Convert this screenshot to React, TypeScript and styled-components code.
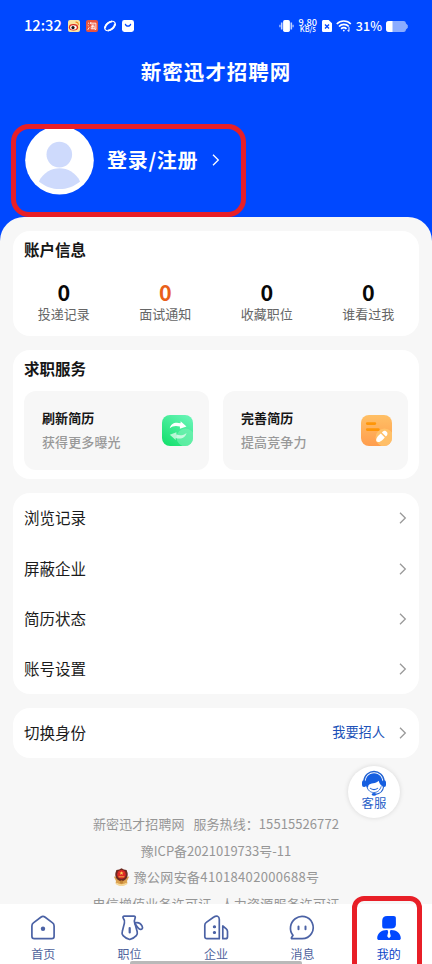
import React from "react";
import styled, { createGlobalStyle } from "styled-components";

const Global = createGlobalStyle`
  * { box-sizing: border-box; }
  html, body { margin: 0; padding: 0; }
  body {
    font-family: "Noto Sans CJK SC", "Noto Sans", sans-serif;
    background: #f7f7f7;
    overflow: hidden;
  }
`;

const Screen = styled.div`
  position: relative;
  width: 432px;
  height: 964px;
  overflow: hidden;
  display: flex;
  flex-direction: column;
  background: #0048ff;
`;

const StatusBar = styled.header`
  flex: none;
  height: 52px;
  padding: 0 24px;
  display: flex;
  align-items: center;
  justify-content: space-between;
  color: #fff;
`;

const StatusGroup = styled.div<{ $gap: number }>`
  display: flex;
  align-items: center;
  gap: ${(p) => p.$gap}px;
  svg { display: block; flex: none; }
`;

const Clock = styled.span`
  width: 37px;
  font-size: 14.7px;
  font-weight: 500;
  line-height: 20px;
  margin: -2px 1px 0 0;
  white-space: nowrap;
`;

const Speed = styled.span`
  width: 20px;
  display: flex;
  flex-direction: column;
  align-items: center;
  font-weight: 500;
  font-size: 9.2px;
  line-height: 8px;
  white-space: nowrap;
  margin-top: -2px;
  small { font-size: 7.3px; line-height: 7px; }
`;

const Percent = styled.span`
  font-size: 12.6px;
  font-weight: 500;
  line-height: 20px;
`;

const Title = styled.h1`
  flex: none;
  margin: 0;
  height: 40px;
  line-height: 38px;
  text-align: center;
  color: #fff;
  font-size: 20.5px;
  letter-spacing: 1px;
  font-weight: 700;
`;

const Profile = styled.section`
  flex: none;
  height: 125px;
  padding: 34px 0 0 25px;
  display: flex;
  align-items: flex-start;
  color: #fff;
`;

const LoginLink = styled.div`
  height: 68px;
  margin-left: 13px;
  display: flex;
  align-items: center;
  gap: 14px;
  font-size: 20px;
  font-weight: 700;
  letter-spacing: 0.7px;
  line-height: 30px;
  svg { display: block; }
`;

const Sheet = styled.main`
  flex: 1;
  min-height: 0;
  overflow: hidden;
  background: #f7f7f7;
  border-radius: 24px 24px 0 0;
  padding: 14px 13px 0;
  display: flex;
  flex-direction: column;
  gap: 14px;
`;

const Card = styled.section<{ $height: number }>`
  flex: none;
  height: ${(p) => p.$height}px;
  background: #fff;
  border-radius: 17px;
`;

const CardTitle = styled.h2`
  margin: 0;
  padding: 0 11px;
  height: 41px;
  line-height: 37px;
  font-size: 15.5px;
  font-weight: 700;
  color: #161616;
`;

const Stats = styled.div`
  display: grid;
  grid-template-columns: repeat(4, 1fr);
  padding-top: 8px;
`;

const Stat = styled.div`
  display: flex;
  flex-direction: column;
  align-items: center;
`;

const StatValue = styled.span<{ $accent?: boolean }>`
  height: 24px;
  line-height: 23px;
  font-size: 21.5px;
  font-weight: 700;
  color: ${(p) => (p.$accent ? "#e9601a" : "#080808")};
`;

const StatLabel = styled.span`
  font-size: 13px;
  line-height: 20px;
  color: #666;
`;

const Services = styled.div`
  display: grid;
  grid-template-columns: 1fr 1fr;
  gap: 14px;
  padding: 0 11px;
`;

const Service = styled.div`
  height: 79px;
  border-radius: 12px;
  background: #f7f7f7;
  display: flex;
  align-items: center;
  justify-content: space-between;
  padding: 0 16px 0 18px;
  svg { display: block; }
`;

const ServiceText = styled.div`
  padding-bottom: 2px;
  font-size: 13px;
  line-height: 24px;
  letter-spacing: 0.12px;
`;

const ServiceName = styled.div`
  font-weight: 700;
  color: #161616;
`;

const ServiceHint = styled.div`
  font-weight: 500;
  color: #999;
`;

const Row = styled.div`
  height: 50.4px;
  padding: 0 12px 0 11px;
  display: flex;
  align-items: center;
  justify-content: space-between;
  font-size: 15.5px;
  line-height: 24px;
  color: #1b1b1b;
  svg { display: block; }
`;

const RowLabel = styled.span`
  padding-bottom: 2px;
`;

const RowAction = styled.span`
  display: flex;
  align-items: center;
  gap: 14px;
  font-size: 13.2px;
  color: #2152b8;
`;

const Legal = styled.footer`
  flex: none;
  margin-top: 39px;
  display: flex;
  flex-direction: column;
  align-items: center;
  font-size: 13px;
  color: #969696;
`;

const LegalLine = styled.div<{ $spacing?: number }>`
  height: 26.5px;
  display: flex;
  align-items: center;
  line-height: 26px;
  white-space: pre;
  letter-spacing: ${(p) => p.$spacing ?? 0}px;
  svg { display: block; margin-right: 4px; }
`;

const TabBar = styled.nav`
  flex: none;
  height: 60px;
  background: #fff;
  display: grid;
  grid-template-columns: repeat(5, 1fr);
`;

const Tab = styled.div<{ $active?: boolean }>`
  display: flex;
  flex-direction: column;
  align-items: center;
  padding-top: 10px;
  color: ${(p) => (p.$active ? "#0a45c8" : "#50639c")};
  font-size: 12px;
  line-height: 20px;
  svg { display: block; margin-bottom: 1px; }
`;

const Support = styled.div`
  position: absolute;
  left: 348px;
  top: 766px;
  width: 52px;
  height: 52px;
  border-radius: 50%;
  background: #fff;
  box-shadow: 0 0 5px rgba(0, 0, 0, 0.13);
  display: flex;
  flex-direction: column;
  align-items: center;
  padding-top: 4px;
  color: #2860c8;
  font-size: 12.4px;
  line-height: 13px;
  svg { display: block; }
`;

const HomeIndicator = styled.div`
  position: absolute;
  left: 130px;
  bottom: 0;
  width: 172px;
  height: 3px;
  border-radius: 2px 2px 0 0;
  background: #b9b9b9;
`;

const Marker = styled.div<{ $x: number; $y: number; $w: number; $h: number; $r: number }>`
  position: absolute;
  left: ${(p) => p.$x}px;
  top: ${(p) => p.$y}px;
  width: ${(p) => p.$w}px;
  height: ${(p) => p.$h}px;
  border: 5px solid #e81f27;
  border-radius: ${(p) => p.$r}px;
`;

const Chevron = ({ color = "#999" }: { color?: string }) => (
  <svg width="8" height="14" viewBox="0 0 8 14" fill="none" stroke={color} strokeWidth="1.3">
    <path d="M1 1.8 6.3 7 1 12.2" />
  </svg>
);

const WeiboIcon = () => (
  <svg width="12" height="12" viewBox="0 0 12 12">
    <rect width="12" height="12" rx="2" fill="#fbe3a0" />
    <ellipse cx="5.5" cy="7.3" rx="4.6" ry="3.3" fill="#d9291f" />
    <ellipse cx="5.4" cy="7.5" rx="3.3" ry="2.2" fill="#fff" />
    <circle cx="5" cy="7.6" r="1.6" fill="#111" />
    <path d="M7.5 2.2c2-.3 3.2 1.2 2.7 3" fill="none" stroke="#ef8b1d" strokeWidth="1.1" />
  </svg>
);

const TaoIcon = () => (
  <svg width="12" height="12" viewBox="0 0 12 12" fill="none" stroke="#fff" strokeWidth=".9">
    <rect width="12" height="12" rx="2" fill="#e8533d" stroke="none" />
    <path d="M2 2.8l1 .8M1.7 5.2l1 .8M1.8 9.8l1.5-2.5M5 2l-.9 2.2M4.6 3.2h5.3v6.2l-1.2.2M5.2 5h3.4M4.8 6.7h4M6.8 5v3.7M5.2 7.4v1.4h3.4V7.4" />
  </svg>
);

const LoopIcon = () => (
  <svg width="12" height="12" viewBox="0 0 12 12" fill="none" stroke="#fff">
    <ellipse cx="6" cy="6" rx="6" ry="3.9" transform="rotate(-38 6 6)" strokeWidth="1.1" />
    <path d="M.9 8.3C1.3 5 4.5 2 8.2 1.4M11.1 3.7C10.7 7 7.5 10 3.8 10.6" strokeWidth="1.9" />
  </svg>
);

const BagIcon = () => (
  <svg width="12" height="12" viewBox="0 0 12 12">
    <rect width="12" height="12" rx="2.4" fill="#fff" />
    <path d="M3.3 3.8c.5 3.1 4.9 3.1 5.4 0" fill="none" stroke="#0048ff" strokeWidth="1.2" />
  </svg>
);

const VibrateIcon = () => (
  <svg width="15" height="12" viewBox="0 0 15 12" fill="#fff">
    <rect x="4.1" y="0" width="6.8" height="12" rx="1.7" />
    <path d="M2.7 2.5v7M12.3 2.5v7" stroke="#fff" strokeOpacity=".75" strokeWidth="1.6" />
    <path d="M.9 4.7v2.6M14.1 4.7v2.6" stroke="#fff" strokeOpacity=".6" strokeWidth="1.4" />
  </svg>
);

const SimIcon = () => (
  <svg width="10" height="12" viewBox="0 0 10 12">
    <path d="M1.6 0h5L10 3.2v7.2c0 1-.6 1.6-1.6 1.6H1.6C.6 12 0 11.4 0 10.4V1.6C0 .6.6 0 1.6 0z" fill="#fff" />
    <path d="M3 4.5l4 4M7 4.5l-4 4" stroke="#0048ff" strokeWidth="1.4" />
  </svg>
);

const WifiIcon = () => (
  <svg width="16" height="12" viewBox="0 0 16 12" fill="none" stroke="#fff" strokeWidth="1.7">
    <path d="M.8 4c3.8-4 10.2-4 14 0M3 6.5c2.7-2.8 7.1-2.8 9.8 0" />
    <path d="M5.1 8.8c1.5-1.6 3.9-1.6 5.4 0" />
    <circle cx="7.8" cy="10.6" r=".9" fill="#fff" stroke="none" />
    <path d="M13 7v4.5M11.6 10l1.4 1.5" strokeWidth="1.1" strokeOpacity=".85" />
  </svg>
);

const BatteryIcon = () => (
  <svg width="22" height="11" viewBox="0 0 22 11">
    <path d="M3 0h14.5c1.6 0 2.2.8 2.5 2.5l1.8 1.7v2.6L20 8.5c-.3 1.7-.9 2.5-2.5 2.5H3C1 11 0 10 0 8V3c0-2 1-3 3-3z" fill="#8bacff" />
    <path d="M3 0h3.5v11H3C1 11 0 10 0 8V3c0-2 1-3 3-3z" fill="#fff" />
  </svg>
);

const Avatar = () => (
  <svg width="69" height="69" viewBox="0 0 69 69">
    <circle cx="34.5" cy="34.2" r="34.3" fill="#fff" />
    <circle cx="34.3" cy="28.6" r="12.8" fill="#cedafc" />
    <path d="M13.9 55.4C22.5 37.9 46.5 37.9 55.1 55.4C43 65.6 26 65.6 13.9 55.4z" fill="#cedafc" />
  </svg>
);

const RefreshIcon = () => (
  <svg width="31" height="31" viewBox="0 0 31 31">
    <defs>
      <linearGradient id="green" x1="0" y1="1" x2=".7" y2="0">
        <stop offset="0" stopColor="#0fdf68" />
        <stop offset="1" stopColor="#63f3b2" />
      </linearGradient>
      <clipPath id="tile"><rect width="31" height="31" rx="8" /></clipPath>
    </defs>
    <g clipPath="url(#tile)">
      <rect width="31" height="31" fill="url(#green)" />
      <circle cx="23.5" cy="22.5" r="9" fill="#7af2b5" fillOpacity=".6" />
    </g>
    <path d="M7.8 13.2C8.6 8.6 13.2 6.6 18.6 8.3V6.2l5.9 5.2-6.6 2.4v-2.2c-4-1.3-7.3-.7-10.1 1.6z" fill="#fff" />
    <path d="M24.5 18C23.7 22.6 19.1 24.6 13.7 22.9V25l-5.9-5.2 6.6-2.6v2.4c4 1.3 7.3.7 10.1-1.6z" fill="#fff" fillOpacity=".65" />
  </svg>
);

const ResumeIcon = () => (
  <svg width="31" height="31" viewBox="0 0 31 31">
    <defs>
      <linearGradient id="orange" x1="0" y1="0" x2="0" y2="1">
        <stop offset="0" stopColor="#ffc066" />
        <stop offset="1" stopColor="#ff9d4d" />
      </linearGradient>
      <clipPath id="tile2"><rect width="31" height="31" rx="8" /></clipPath>
    </defs>
    <g clipPath="url(#tile2)">
      <rect width="31" height="31" fill="url(#orange)" />
      <circle cx="23.5" cy="22.5" r="9" fill="#ffc86f" fillOpacity=".75" />
    </g>
    <path d="M6.3 8.6h7.5M6.3 14.6h11" stroke="#ff9608" strokeWidth="2.9" strokeLinecap="round" />
    <path d="M15.6 26.6c-1.2-1.9.3-4.6 2.2-6.4l2-1.8 4 4-1.8 2c-1.8 1.9-4.6 3.4-6.4 2.2z" fill="#fff" />
    <path d="M20.9 17.4l1-1c2.4-2 6 1.6 4 4l-1 1z" fill="#fff" />
  </svg>
);

const PoliceIcon = () => (
  <svg width="17" height="18" viewBox="0 0 17 18">
    <path d="M.8 8.5L3 13l-.4 2.3C5.6 18.6 11.4 18.6 14.4 15.3L14 13l2.2-4.5L13.3 9H3.7z" fill="#dba250" />
    <path d="M3.2 15.4c2.9 2.2 7.7 2.2 10.6 0" stroke="#f6d898" strokeWidth="1.8" fill="none" />
    <path d="M8.5.3l2.3 1.3 2.8.3 1 3c.7 4.4-1.8 7.3-6.1 8.6C4.2 12.2 1.7 9.3 2.4 4.9l1-3 2.8-.3z" fill="#6d2920" />
    <circle cx="8.5" cy="6.4" r="4.3" fill="#dc2924" />
    <path d="M8.5 3.2l.6 1.4h1.5l-1.2.9.4 1.5-1.3-.9-1.3.9.4-1.5-1.2-.9h1.5z" fill="#ffce53" />
    <path d="M5.7 8.8h5.6" stroke="#f0b044" />
    <circle cx="8.5" cy="14" r="1.7" fill="#c48636" />
  </svg>
);

const SupportIcon = () => (
  <svg width="26" height="27" viewBox="0 0 26 27" fill="none">
    <path d="M2.9 11C4-1.6 22-1.6 23.1 11" stroke="#2363d2" strokeWidth="1.4" />
    <path d="M4.9 16C3.2 7 8 3.2 13 3.2S22.8 7 21.1 16c-1.8-1.2-3-3-3.4-5.2-2.9 3.2-8.3 2-10.3 4.6L6.9 18z" fill="#165fe0" />
    <rect x="1" y="10.2" width="4.2" height="6.8" rx="2" fill="#165fe0" />
    <rect x="20.8" y="10.2" width="4.2" height="6.8" rx="2" fill="#165fe0" />
    <path d="M5.8 16.5c1.1 4 3.7 6 7 6 3.5 0 6.2-2.2 7.4-6.2" stroke="#2363d2" strokeWidth=".9" />
    <path d="M9 18c2 2.2 6 2.2 8 0" stroke="#2363d2" strokeWidth="1.1" />
    <path d="M22.6 16.5c-.5 4.4-3.4 7.3-8.2 7.9" stroke="#2363d2" strokeWidth="1.1" />
    <ellipse cx="13" cy="24.4" rx="2.2" ry="1.4" fill="#165fe0" />
  </svg>
);

const HomeIcon = () => (
  <svg width="28" height="29" viewBox="0 0 28 29" fill="none" stroke="#4b62a5" strokeWidth="1.7" strokeLinejoin="round">
    <path d="M11.8 3.3 4.4 8.9c-1.1.8-1.5 1.7-1.5 3v10.4c0 1.6.8 2.4 2.4 2.4h17.4c1.6 0 2.4-.8 2.4-2.4V11.9c0-1.3-.4-2.2-1.5-3l-7.4-5.6c-1.6-1.2-2.8-1.2-4.4 0z" />
    <circle cx="14" cy="14.8" r="2.2" fill="#4b62a5" stroke="none" />
  </svg>
);

const JobIcon = () => (
  <svg width="28" height="29" viewBox="0 0 28 29" fill="none" stroke="#4b62a5" strokeWidth="1.7" strokeLinejoin="round" strokeLinecap="round">
    <path d="M8.3 2.2h9.6c1.2 0 1.7.9 1.2 1.9-.9 1.9-.9 3.4-.3 5l2.4 8.6c.4 1.7.2 2.7-.9 3.9-1.6 1.8-3.8 3-6.6 3.9-2.8-.9-5-2.1-6.6-3.9-1.1-1.2-1.4-2.2-.9-3.9L8.4 9.1c.5-1.8.3-3.200-1.200-5-.6-1-.1-1.900 1.100-1.900z" />
    <path d="M18.700 8.900c3.300-1 6.100.5 7.400 3.200 1.100 2.400-.2 3.800-2.300 3.100-2.200-.8-3-3.600-5-5.500" />
    <path d="M13.700 14v4.500" strokeWidth="2.200" />
  </svg>
);

const CompanyIcon = () => (
  <svg width="28" height="29" viewBox="0 0 28 29" fill="none" stroke="#4b62a5" strokeWidth="1.7" strokeLinejoin="round" strokeLinecap="round">
    <path d="M17.300 24.700H5c-1.400 0-2.200-.8-2.200-2.200V11.200c0-1.300.4-2.100 1.500-2.800l7.200-5.200c3.100-2 5.800-1.400 5.800 2.200zM20.800 24.700h2.700c1.400 0 2-.7 2-2v-5.200c0-1.200-.3-1.900-1.200-2.700L20.800 12z" />
    <path d="M12.300 12.800h.3M12.300 18.500h.3" strokeWidth="3" />
  </svg>
);

const MessageIcon = () => (
  <svg width="28" height="29" viewBox="0 0 28 29" fill="none" stroke="#4b62a5" strokeWidth="1.7" strokeLinejoin="round" strokeLinecap="round">
    <path d="M5 21.200C.8 16.400 2 8.500 7.200 4.700c5.700-4.200 14-2.600 17 4.100 3.300 7.400-1.800 15.900-10 15.900H4.400c-1.100 0-1.300-.6-.7-1.400z" />
    <path d="M10.500 12.500v2.800M17.500 12.500v2.800" strokeWidth="2" />
  </svg>
);

const MineIcon = () => (
  <svg width="28" height="29" viewBox="0 0 28 29" fill="#0048ff">
    <path d="M12.200 2h6.300c1.600 0 2.400.8 2.400 2.400v5.800c0 2.900-1.600 4.400-4.500 4.400H9.900c-1.900 0-2.700-.8-2.700-2.600V7c0-3.300 1.700-5 5-5z" />
    <path d="M2.200 24.200c0-5 4.300-8.300 9.600-8.300h4.400c5.300 0 9.600 3.300 9.600 8.300 0 1.200-.7 1.800-2 1.800H4.200c-1.300 0-2-.6-2-1.800z" />
    <path d="M12.500 15.900h3l-.7 2 1 4.300-1.800 2.100-1.800-2.100 1-4.300z" fill="#fff" />
  </svg>
);

const stats = [
  { label: "投递记录", value: 0 },
  { label: "面试通知", value: 0, accent: true },
  { label: "收藏职位", value: 0 },
  { label: "谁看过我", value: 0 },
];

const tabs = [
  { label: "首页", icon: <HomeIcon /> },
  { label: "职位", icon: <JobIcon /> },
  { label: "企业", icon: <CompanyIcon /> },
  { label: "消息", icon: <MessageIcon /> },
  { label: "我的", icon: <MineIcon />, active: true },
];

export default function App() {
  return (
    <Screen>
      <Global />
      <StatusBar>
        <StatusGroup $gap={6}>
          <Clock>12:32</Clock>
          <WeiboIcon />
          <TaoIcon />
          <LoopIcon />
          <BagIcon />
        </StatusGroup>
        <StatusGroup $gap={4}>
          <VibrateIcon />
          <Speed>9.80<small>KB/s</small></Speed>
          <SimIcon />
          <WifiIcon />
          <Percent>31%</Percent>
          <BatteryIcon />
        </StatusGroup>
      </StatusBar>
      <Title>新密迅才招聘网</Title>
      <Profile>
        <Avatar />
        <LoginLink>登录/注册<Chevron color="#fff" /></LoginLink>
      </Profile>

      <Sheet>
        <Card $height={105}>
          <CardTitle>账户信息</CardTitle>
          <Stats>
            {stats.map((s) => (
              <Stat key={s.label}>
                <StatValue $accent={s.accent}>{s.value}</StatValue>
                <StatLabel>{s.label}</StatLabel>
              </Stat>
            ))}
          </Stats>
        </Card>
        <Card $height={129}>
          <CardTitle>求职服务</CardTitle>
          <Services>
            <Service>
              <ServiceText>
                <ServiceName>刷新简历</ServiceName>
                <ServiceHint>获得更多曝光</ServiceHint>
              </ServiceText>
              <RefreshIcon />
            </Service>
            <Service>
              <ServiceText>
                <ServiceName>完善简历</ServiceName>
                <ServiceHint>提高竞争力</ServiceHint>
              </ServiceText>
              <ResumeIcon />
            </Service>
          </Services>
        </Card>
        <Card $height={201}>
          {["浏览记录", "屏蔽企业", "简历状态", "账号设置"].map((name) => (
            <Row key={name}><RowLabel>{name}</RowLabel><Chevron /></Row>
          ))}
        </Card>
        <Card $height={50}>
          <Row>
            <RowLabel>切换身份</RowLabel>
            <RowAction><RowLabel>我要招人</RowLabel><Chevron /></RowAction>
          </Row>
        </Card>
        <Legal>
          <LegalLine $spacing={0.07}>{"新密迅才招聘网   服务热线：15515526772"}</LegalLine>
          <LegalLine>豫ICP备2021019733号-11</LegalLine>
          <LegalLine $spacing={0.33}><PoliceIcon />豫公网安备41018402000688号</LegalLine>
          <LegalLine $spacing={0.2}>{"电信增值业务许可证   人力资源服务许可证"}</LegalLine>
        </Legal>
      </Sheet>

      <TabBar>
        {tabs.map((t) => (
          <Tab key={t.label} $active={t.active}>{t.icon}{t.label}</Tab>
        ))}
      </TabBar>

      <Support><SupportIcon />客服</Support>
      <HomeIndicator />
      <Marker $x={11} $y={124} $w={235} $h={93} $r={18} />
      <Marker $x={352} $y={896} $w={70} $h={80} $r={12} />
    </Screen>
  );
}
